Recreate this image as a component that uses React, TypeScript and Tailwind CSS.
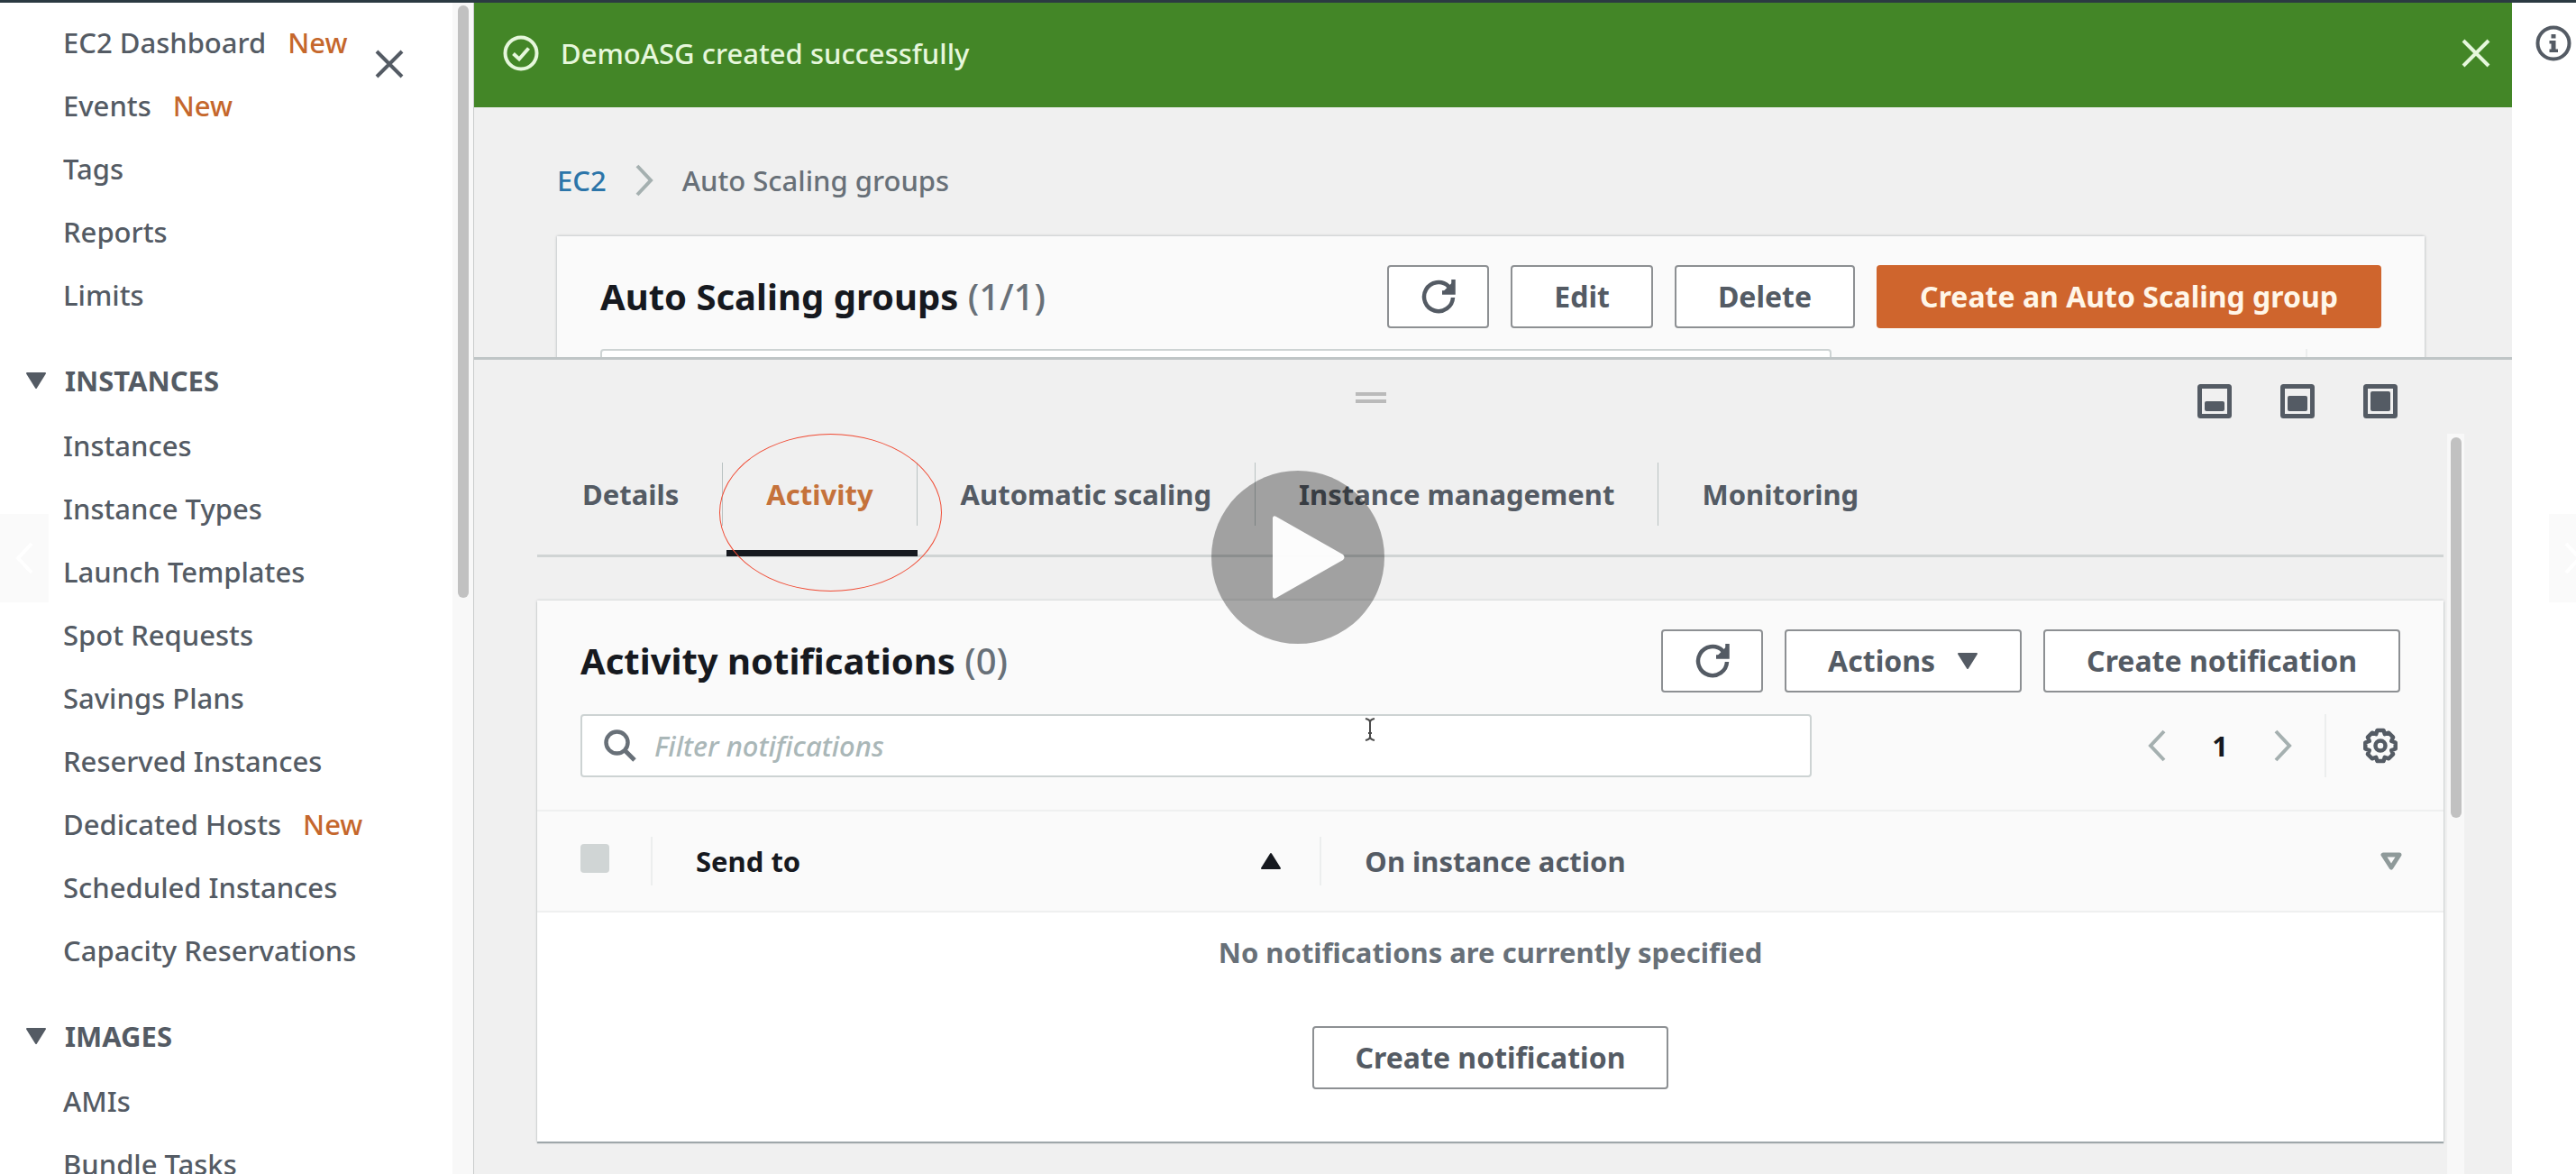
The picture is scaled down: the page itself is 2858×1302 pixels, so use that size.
import type { ReactNode } from "react";

type NavItem = { label: string; isNew?: boolean };

const topItems: NavItem[] = [
  { label: "EC2 Dashboard", isNew: true },
  { label: "Events", isNew: true },
  { label: "Tags" },
  { label: "Reports" },
  { label: "Limits" },
];

const instanceItems: NavItem[] = [
  { label: "Instances" },
  { label: "Instance Types" },
  { label: "Launch Templates" },
  { label: "Spot Requests" },
  { label: "Savings Plans" },
  { label: "Reserved Instances" },
  { label: "Dedicated Hosts", isNew: true },
  { label: "Scheduled Instances" },
  { label: "Capacity Reservations" },
];

const imageItems: NavItem[] = [{ label: "AMIs" }, { label: "Bundle Tasks" }];

const tabs = ["Details", "Activity", "Automatic scaling", "Instance management", "Monitoring"];

function CrossIcon({ className }: { className: string }) {
  return (
    <svg viewBox="0 0 32 32" className={className} fill="none" stroke="currentColor" strokeWidth="4" aria-hidden="true">
      <path d="M2 2 30 30M30 2 2 30" />
    </svg>
  );
}

function Chevron({ direction, className }: { direction: "left" | "right"; className: string }) {
  return (
    <svg viewBox="0 0 20 36" className={className} fill="none" stroke="currentColor" strokeWidth="4" aria-hidden="true">
      <path d={direction === "left" ? "M18 2 3 18 18 34" : "M2 2 17 18 2 34"} />
    </svg>
  );
}

function Triangle({ up, hollow, className }: { up?: boolean; hollow?: boolean; className: string }) {
  return (
    <svg
      viewBox="0 0 24 20"
      className={className}
      fill={hollow ? "none" : "currentColor"}
      stroke="currentColor"
      strokeWidth={hollow ? 5 : 2}
      strokeLinejoin="round"
      aria-hidden="true"
    >
      <path d={up ? "M12 2 22 18H2Z" : hollow ? "M3 3H21L12 17Z" : "M2 2H22L12 18Z"} />
    </svg>
  );
}

function RefreshIcon() {
  return (
    <svg viewBox="0 0 40 40" className="size-10" fill="none" stroke="currentColor" strokeWidth="4.500" aria-hidden="true">
      <path d="M36 21A16 16 0 1 1 31 8.500L35 13" />
      <path d="M36.500 1V15.500H24" />
      <path d="M24 15.500 36.500 3V15.500Z" fill="currentColor" stroke="none" />
    </svg>
  );
}

function GearIcon() {
  return (
    <svg viewBox="0 0 40 40" className="size-10" fill="none" stroke="currentColor" strokeWidth="4.500" strokeLinejoin="round" aria-hidden="true">
      <path d="M16.500 3h7l1.300 4.200 4.500-1.500 4.800 4.900-1.900 4.300 4.500 1.600v7l-4.500 1.600 1.900 4.300-4.800 4.900-4.500-1.500L23.500 37h-7l-1.300-4.200-4.500 1.500-4.800-4.900 1.900-4.300L3.300 23.500v-7l4.500-1.600-1.900-4.300 4.800-4.900 4.500 1.500Z" />
      <circle cx="20" cy="20" r="5.500" />
    </svg>
  );
}

function PanelIcon({ label, y, height }: { label: string; y: number; height: number }) {
  return (
    <button type="button" aria-label={label}>
      <svg viewBox="0 0 38 38" className="size-[38px]" fill="none" aria-hidden="true">
        <rect x="2.500" y="2.500" width="33" height="33" rx="1" stroke="currentColor" strokeWidth="5" />
        <rect x="8" y={y} width="22" height={height} rx="2" fill="currentColor" />
      </svg>
    </button>
  );
}

function NavList({ items }: { items: NavItem[] }) {
  return (
    <ul>
      {items.map((item) => (
        <li key={item.label} className="flex h-[70px] items-center gap-6 pl-[70px]">
          <a href="#">{item.label}</a>
          {item.isNew && <span className="text-[#c5672c]">New</span>}
        </li>
      ))}
    </ul>
  );
}

function NavSection({ title, items }: { title: string; items: NavItem[] }) {
  return (
    <section>
      <h2 className="mt-[23px] h-[74px] font-bold">
        <button type="button" className="flex h-full items-center gap-5 pl-7">
          <Triangle className="h-5 w-6" />
          {title}
        </button>
      </h2>
      <NavList items={items} />
    </section>
  );
}

function ActionButton({ children, label }: { children: ReactNode; label?: string }) {
  return (
    <button
      type="button"
      aria-label={label}
      className={
        "flex h-[70px] items-center justify-center gap-6 rounded-[4px] border-2 border-[#8d9093] bg-white text-[32px] font-bold whitespace-nowrap text-[#545b64] " +
        (label ? "w-[113px]" : "px-[46px]")
      }
    >
      {children}
    </button>
  );
}

function FilterBox({ id, label, children }: { id: string; label: string; children?: ReactNode }) {
  return (
    <div className="relative flex h-[70px] max-w-[1366px] flex-1 items-center gap-5 rounded-[4px] border-2 border-[#cdd3d3] bg-white pl-6">
      {children}
      <input
        id={id}
        type="text"
        aria-label={label}
        placeholder={children ? label : undefined}
        className="h-full min-w-0 flex-1 bg-transparent italic outline-none placeholder:text-[#aab7b8]"
      />
    </div>
  );
}

function NotificationToolbar() {
  return (
    <div className="flex items-center justify-between">
      <FilterBox id="notification-filter" label="Filter notifications">
        <svg viewBox="0 0 36 36" className="size-9 text-[#687078]" fill="none" stroke="currentColor" strokeWidth="4.500" aria-hidden="true">
          <circle cx="14.500" cy="14.500" r="12" />
          <path d="M23 23 34 34" strokeWidth="5" />
        </svg>
        <svg viewBox="0 0 14 26" className="absolute top-0.5 left-[867px] h-[26px] w-3.5 text-[#4a4a4a]" fill="none" stroke="currentColor" strokeWidth="2" aria-hidden="true">
          <path d="M2 1Q7 2 7 5Q7 2 12 1M7 5V21M2 25Q7 24 7 21Q7 24 12 25M5 17H9" />
        </svg>
      </FilterBox>
      <div className="flex h-[70px] items-center pr-0.5">
        <button type="button" aria-label="Previous page" className="text-[#a5b0b0]">
          <Chevron direction="left" className="h-9 w-5" />
        </button>
        <span className="w-[120px] text-center font-bold text-[#16191f]">1</span>
        <button type="button" aria-label="Next page" className="text-[#a5b0b0]">
          <Chevron direction="right" className="h-9 w-5" />
        </button>
        <div className="ml-9 h-full border-l-2 border-[#eceeee]" />
        <button type="button" aria-label="Preferences" className="ml-10 text-[#545b64]">
          <GearIcon />
        </button>
      </div>
    </div>
  );
}

export default function App() {
  return (
    <div className="relative flex h-screen flex-col overflow-hidden border-t-[3px] border-[#2b3a42] bg-white font-['Noto_Sans',sans-serif] text-[31px] leading-[44px] font-medium text-[#545b64]">
      <div className="flex min-h-0 flex-1">
        <aside className="flex shrink-0 border-r border-[#c9cccc]">
          <nav aria-label="EC2" className="relative w-[502px] overflow-hidden pt-[9px]">
            <button type="button" aria-label="Close navigation" className="absolute top-[52px] left-[416px]">
              <CrossIcon className="size-8" />
            </button>
            <NavList items={topItems} />
            <NavSection title="INSTANCES" items={instanceItems} />
            <NavSection title="IMAGES" items={imageItems} />
          </nav>
          <div className="w-[23px] bg-[#f8f8f8] pt-[3px] pl-1.5">
            <div className="h-[657px] w-3 rounded-full bg-[#c1c1c1]" />
          </div>
        </aside>

        <main className="flex min-w-0 flex-1 flex-col bg-[#f0f0f0]">
          <div role="status" className="flex h-[116px] shrink-0 items-center gap-6 bg-[#438627] pr-6 pb-1 pl-8 text-[#e6f7dc]">
            <svg viewBox="0 0 40 40" className="size-10" fill="none" stroke="currentColor" strokeWidth="4" aria-hidden="true">
              <circle cx="20" cy="20" r="17.500" />
              <path d="M11.500 20.500 18 26.500 28.500 14.500" />
            </svg>
            <p className="flex-1">DemoASG created successfully</p>
            <button type="button" aria-label="Dismiss">
              <CrossIcon className="size-8" />
            </button>
          </div>

          <div className="h-[277px] shrink-0 overflow-hidden pt-[59px] pr-[97px] pl-[92px]">
            <nav aria-label="Breadcrumb" className="flex items-center gap-8 text-[#687078]">
              <a href="#" className="text-[#2c75a9]">
                EC2
              </a>
              <Chevron direction="right" className="h-9 w-5 text-[#a5b0b0]" />
              <span>Auto Scaling groups</span>
            </nav>
            <section className="mt-10 bg-[#fafafa] px-12 pt-8 shadow-[0_0_3px_rgba(0,28,36,0.3)]">
              <div className="mb-[23px] flex items-center justify-between">
                <h1 className="text-[40px] font-bold text-[#16191f]">
                  Auto Scaling groups <span className="font-medium text-[#687078]">(1/1)</span>
                </h1>
                <div className="flex gap-6">
                  <ActionButton label="Refresh groups">
                    <RefreshIcon />
                  </ActionButton>
                  <ActionButton>Edit</ActionButton>
                  <ActionButton>Delete</ActionButton>
                  <button type="button" className="h-[70px] rounded-[4px] bg-[#cf652d] px-12 text-[32px] font-bold whitespace-nowrap text-[#fff6e8]">
                    Create an Auto Scaling group
                  </button>
                </div>
              </div>
              <div className="flex items-center justify-between">
                <FilterBox id="group-filter" label="Filter Auto Scaling groups" />
                <div className="mr-[82px] h-[70px] border-l-2 border-[#eceeee]" />
              </div>
            </section>
          </div>

          <div className="flex min-h-0 flex-1 flex-col border-t-[3px] border-[#bfc5c6]">
            <div className="flex shrink-0 items-center pt-[27px] pr-[127px] pb-[17px] pl-[78px]">
              <div className="flex flex-1 justify-center">
                <button type="button" aria-label="Resize panel" className="mb-2 h-3 w-[34px] border-y-4 border-[#bababa]" />
              </div>
              <div className="flex gap-[54px]">
                <PanelIcon label="Small panel" y={19} height={11} />
                <PanelIcon label="Half panel" y={13} height={17} />
                <PanelIcon label="Full panel" y={8} height={22} />
              </div>
            </div>

            <div className="flex min-h-0 flex-1 pr-[53px] pl-[70px]">
              <div className="min-w-0 flex-1 pt-8 pr-1">
                <div role="tablist" className="flex border-b-[3px] border-[#d0d4d4] pl-0.5">
                  {tabs.map((tab) => {
                    const active = tab === "Activity";
                    return (
                      <div key={tab} className="relative pb-8">
                        <button
                          type="button"
                          role="tab"
                          aria-selected={active}
                          className={
                            "h-[70px] border-r px-12 font-bold whitespace-nowrap " +
                            (tab === "Monitoring" ? "border-transparent " : "border-[#b9c2c2] ") +
                            (active ? "text-[#c5723b]" : "text-[#545b64]")
                          }
                        >
                          {tab}
                        </button>
                        {active && (
                          <>
                            <div className="absolute right-0 -bottom-0.5 left-1 h-[7px] bg-[#16191f]" />
                            <div className="pointer-events-none absolute -top-8 -left-1 h-[175px] w-[247px] rounded-[50%] border border-[#f04a33]" />
                          </>
                        )}
                      </div>
                    );
                  })}
                </div>

                <section className="mt-12 bg-white shadow-[0_2px_1px_rgba(0,28,36,0.3),0_0_3px_rgba(0,28,36,0.2)]">
                  <div className="bg-[#fafafa] px-12 pt-8 pb-9">
                    <div className="mb-6 flex items-center justify-between">
                      <h2 className="text-[40px] font-bold text-[#16191f]">
                        Activity notifications <span className="font-medium text-[#687078]">(0)</span>
                      </h2>
                      <div className="flex gap-6">
                        <ActionButton label="Refresh notifications">
                          <RefreshIcon />
                        </ActionButton>
                        <ActionButton>
                          Actions
                          <Triangle className="h-5 w-6" />
                        </ActionButton>
                        <ActionButton>Create notification</ActionButton>
                      </div>
                    </div>
                    <NotificationToolbar />
                  </div>
                  <table className="w-full table-fixed">
                    <colgroup>
                      <col className="w-[128px]" />
                      <col className="w-[35.1%]" />
                      <col />
                    </colgroup>
                    <thead className="border-y-2 border-[#eff0f0] bg-[#fafafa] text-left">
                      <tr className="h-[112px]">
                        <th scope="col">
                          <div className="flex h-[54px] items-center border-r-2 border-[#eceeee] pl-12">
                            <input
                              type="checkbox"
                              disabled
                              aria-label="Select all notifications"
                              className="mb-1.5 size-8 appearance-none rounded-[4px] bg-[#d0d5d5]"
                            />
                          </div>
                        </th>
                        <th scope="col">
                          <div className="flex h-[54px] items-center justify-between border-r-2 border-[#eceeee] pr-[42px] pl-12 text-[#16191f]">
                            Send to
                            <Triangle up className="h-5 w-6" />
                          </div>
                        </th>
                        <th scope="col">
                          <div className="flex h-[54px] items-center justify-between pr-[46px] pl-12">
                            On instance action
                            <Triangle hollow className="h-5 w-6 text-[#8f9a9a]" />
                          </div>
                        </th>
                      </tr>
                    </thead>
                    <tbody>
                      <tr>
                        <td colSpan={3} className="pt-[22px] pb-[58px]">
                          <div className="flex flex-col items-center gap-[60px]">
                            <p className="font-bold text-[#687078]">No notifications are currently specified</p>
                            <ActionButton>Create notification</ActionButton>
                          </div>
                        </td>
                      </tr>
                    </tbody>
                  </table>
                </section>
              </div>
              <div className="w-[19px] bg-[#f8f8f8] pt-1 pl-1">
                <div className="h-[422px] w-3 rounded-full bg-[#c1c1c1]" />
              </div>
            </div>
          </div>
        </main>

        <aside className="w-[71px] shrink-0 pt-[25px] pl-[26px]">
          <button type="button" aria-label="Info">
            <svg viewBox="0 0 40 40" className="size-10" fill="none" stroke="currentColor" strokeWidth="4" aria-hidden="true">
              <circle cx="20" cy="20" r="17.500" />
              <path d="M17.500 10H22.500V14.500H17.500ZM15.500 17H22.500V26.500H25V30H15.500V26.500H17.500V20.500H15.500Z" fill="currentColor" stroke="none" />
            </svg>
          </button>
        </aside>
      </div>

      <button
        type="button"
        aria-label="Play video"
        className="absolute top-[519px] left-[1344px] flex size-48 items-center justify-center rounded-full bg-black/33"
      >
        <svg viewBox="0 0 80 92" className="ml-6 h-[92px] w-20" fill="#ffffff" fillOpacity="0.97" aria-hidden="true">
          <path d="M0 2Q1-1 4 1L78 43Q81 46 78 49L4 91Q1 93 0 90Z" />
        </svg>
      </button>
      <button
        type="button"
        aria-label="Previous slide"
        className="absolute top-[567px] left-0 flex h-[98px] w-[54px] items-center justify-center bg-[#fafafa] text-white"
      >
        <Chevron direction="left" className="h-9 w-5" />
      </button>
      <button
        type="button"
        aria-label="Next slide"
        className="absolute top-[567px] -right-6 flex h-[98px] w-[54px] items-center justify-center bg-[#fafafa] text-white"
      >
        <Chevron direction="right" className="h-9 w-5" />
      </button>
    </div>
  );
}
